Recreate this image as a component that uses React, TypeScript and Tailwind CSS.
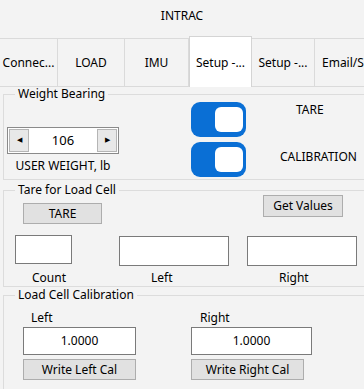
import { ReactNode } from "react";

const tabs = [
  { label: "Connec...", w: "w-[58px] justify-center" },
  { label: "LOAD", w: "w-[67px] justify-center" },
  { label: "IMU", w: "w-[64px] justify-center" },
  { label: "Setup -...", w: "w-[63px] justify-center", active: true },
  { label: "Setup -...", w: "w-[63px] justify-center" },
  { label: "Email/S", w: "w-[70px] justify-start pl-[7px]" },
];

function Button({ children, className }: { children: ReactNode; className: string }) {
  return (
    <div
      className={`flex items-center justify-center border border-[#adadad] bg-[#e1e1e1] text-black ${className}`}
    >
      {children}
    </div>
  );
}

function Toggle() {
  return (
    <div className="flex h-[35px] w-[55px] items-center justify-end rounded-[9px] bg-[#0a6fd5] pr-[3px]">
      <div className="h-[25px] w-[28px] rounded-[6px] bg-white" />
    </div>
  );
}

function Group({ title, className, children }: { title: string; className: string; children: ReactNode }) {
  return (
    <fieldset className={`ml-[3px] w-[400px] border border-[#dcdcdc] ${className}`}>
      <legend className="ml-[11px] px-[3px] leading-[14px]">{title}</legend>
      {children}
    </fieldset>
  );
}

export default function App() {
  return (
    <div
      className="h-[389px] w-[364px] overflow-hidden bg-[#f3f3f3] text-[12px] text-black"
      style={{ fontFamily: '"Noto Sans", "Open Sans", sans-serif' }}
    >
      <div className="flex h-[38px] items-start justify-center pt-[6px] leading-[20px]">INTRAC</div>

      <div className="flex h-[49px] border-b border-[#dadada]">
        {tabs.map((t, i) =>
          t.active ? (
            <div
              key={i}
              className={`${t.w} -mt-[2px] flex h-[51px] shrink-0 items-center border border-b-0 border-[#d4d4d4] bg-white pt-[1px]`}
            >
              {t.label}
            </div>
          ) : (
            <div
              key={i}
              className={`${t.w} flex h-[48px] shrink-0 items-center whitespace-nowrap border-t border-r border-[#dadada] pt-[1px]`}
            >
              {t.label}
            </div>
          )
        )}
      </div>

      <Group title="Weight Bearing" className="h-[93px]">
        <div className="flex">
          <div className="ml-[3px] mt-[26px] flex w-[112px] flex-col items-center">
            <div className="flex h-[27px] w-[112px] items-stretch border border-[#8a8a8a] bg-white p-[1px]">
              <div className="flex w-[20px] items-center justify-center border border-[#b5b5b5] bg-[#e8e8e8] text-[7px]">
                ◀
              </div>
              <div className="flex flex-1 items-center justify-center text-[13px]">106</div>
              <div className="flex w-[20px] items-center justify-center border border-[#b5b5b5] bg-[#e8e8e8] text-[7px]">
                ▶
              </div>
            </div>
            <span className="mt-[4px] leading-[16px]">USER WEIGHT, lb</span>
          </div>
          <div className="ml-[72px] mt-[1px] flex flex-col gap-[5px]">
            <Toggle />
            <Toggle />
          </div>
          <div className="ml-[34px] flex flex-col leading-[16px]">
            <span className="ml-[16px] mt-[1px]">TARE</span>
            <span className="mt-[31px]">CALIBRATION</span>
          </div>
        </div>
      </Group>

      <Group title="Tare for Load Cell" className="mt-[3px] h-[104px]">
        <div className="flex flex-col">
          <div className="flex">
            <Button className="ml-[19px] mt-[6px] h-[21px] w-[79px]">TARE</Button>
            <Button className="ml-[161px] mt-[-2px] h-[22px] w-[80px]">Get Values</Button>
          </div>
          <div className="mt-[11px] flex items-start">
            <div className="flex flex-col">
              <div className="ml-[11px] h-[29px] w-[57px] border border-[#7a7a7a] bg-white" />
              <span className="ml-[28px] mt-[6px] leading-[16px]">Count</span>
            </div>
            <div className="ml-[47px] mt-[1px] flex flex-col">
              <div className="h-[30px] w-[110px] border border-[#7a7a7a] bg-white" />
              <span className="ml-[32px] mt-[4px] leading-[16px]">Left</span>
            </div>
            <div className="ml-[18px] mt-[1px] flex flex-col">
              <div className="h-[30px] w-[110px] border border-[#7a7a7a] bg-white" />
              <span className="ml-[32px] mt-[4px] leading-[16px]">Right</span>
            </div>
          </div>
        </div>
      </Group>

      <Group title="Load Cell Calibration" className="mt-[1px] h-[120px]">
        <div className="flex">
          <div className="ml-[19px] flex flex-col">
            <span className="ml-[8px] mt-[8px] leading-[16px]">Left</span>
            <div className="mt-[1px] flex h-[28px] w-[113px] items-center justify-center border border-[#7a7a7a] bg-white">
              1.0000
            </div>
            <Button className="mt-[4px] h-[21px] w-[113px]">Write Left Cal</Button>
          </div>
          <div className="ml-[55px] flex flex-col">
            <span className="ml-[9px] mt-[8px] leading-[16px]">Right</span>
            <div className="mt-[1px] flex h-[28px] w-[121px] items-center justify-center border border-[#7a7a7a] bg-white">
              1.0000
            </div>
            <Button className="mt-[4px] h-[21px] w-[113px]">Write Right Cal</Button>
          </div>
        </div>
      </Group>
    </div>
  );
}
